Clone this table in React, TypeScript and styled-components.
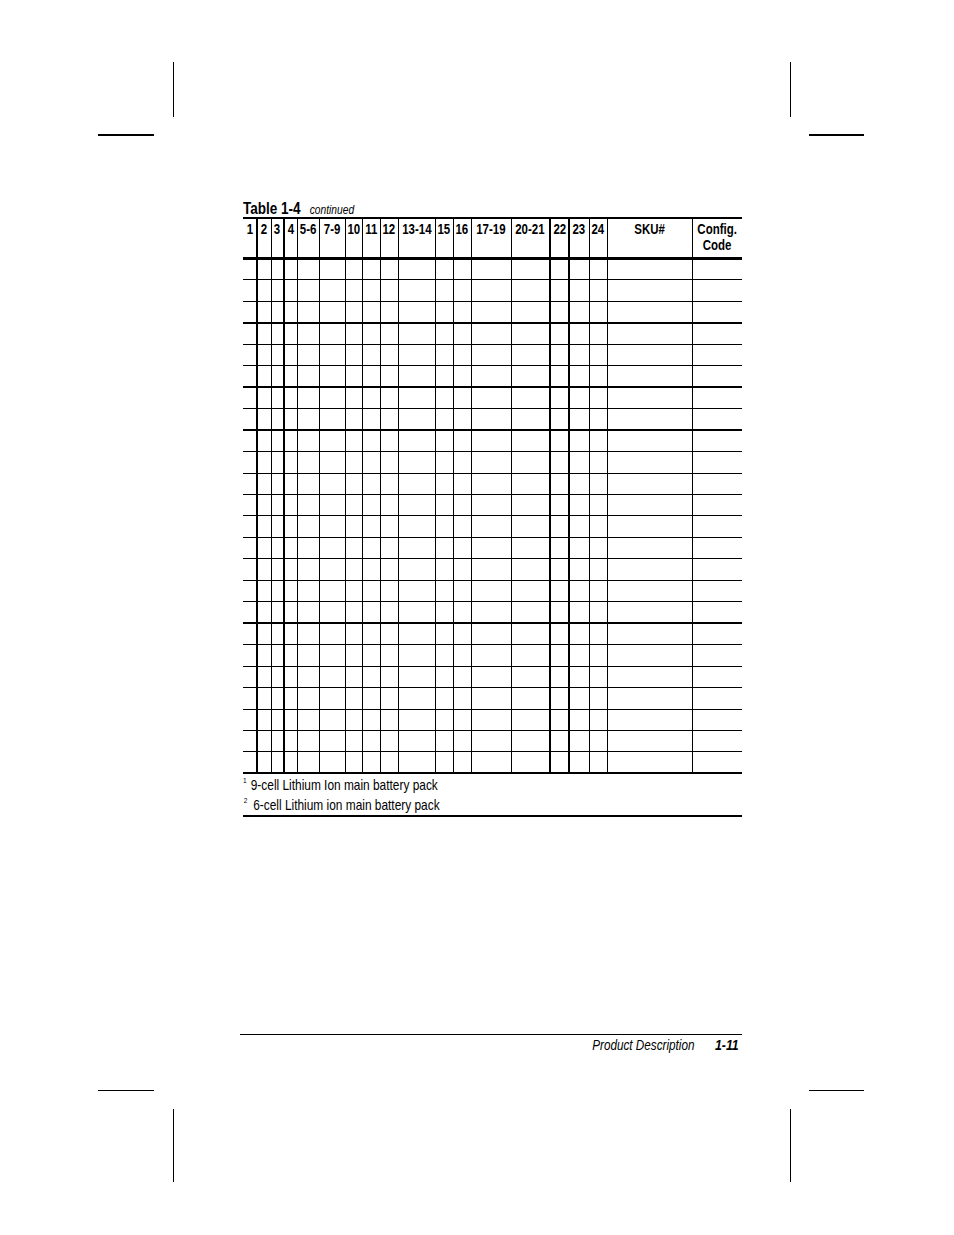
import React from 'react';
import styled, { createGlobalStyle } from 'styled-components';

const font = `"Liberation Sans", Arial, Helvetica, sans-serif`;

const GlobalStyle = createGlobalStyle`
  html, body {
    margin: 0;
    padding: 0;
    background: #fff;
  }
`;

const Page = styled.div`
  width: 954px;
  height: 1235px;
  display: flex;
  flex-direction: column;
  background: #fff;
  color: #000;
  font-family: ${font};
`;

// the print face is a condensed grotesque; squeeze the regular face to match it
const Squeeze = styled.span<{ $origin: 'left' | 'center' | 'right' }>`
  display: inline-block;
  white-space: pre-line;
  transform: scaleX(0.82);
  transform-origin: ${({ $origin }) => $origin} center;
`;

const MarkBand = styled.div<{ $bottom?: boolean }>`
  display: flex;
  justify-content: space-between;
  padding: ${({ $bottom }) => ($bottom ? '0 90px 53px 98px' : '62px 90px 0 98px')};
`;

const Corner = styled.div<{ $side: 'left' | 'right'; $bottom?: boolean }>`
  display: flex;
  flex-direction: column;
  align-items: ${({ $side }) => ($side === 'left' ? 'flex-end' : 'flex-start')};
  width: ${({ $side }) => ($side === 'left' ? '76px' : '74px')};
  gap: ${({ $bottom }) => ($bottom ? '18px' : '17px')};
`;

const VMark = styled.div<{ $len: number }>`
  width: 1px;
  height: ${({ $len }) => $len}px;
  background: #000;
`;

const HMark = styled.div<{ $side: 'left' | 'right'; $weight: number }>`
  width: ${({ $side }) => ($side === 'left' ? '56px' : '55px')};
  height: ${({ $weight }) => $weight}px;
  background: #000;
  align-self: ${({ $side }) => ($side === 'left' ? 'flex-start' : 'flex-end')};
`;

const Content = styled.div`
  margin: 63px 0 0 243px;
  width: 499px;
`;

const Caption = styled.div`
  height: 18px;
  line-height: 18px;
  white-space: nowrap;
`;

const CaptionTitle = styled.span`
  font-size: 16.5px;
  font-weight: bold;
`;

const CaptionNote = styled.span`
  margin-left: 11px;
  font-size: 12.5px;
  font-style: italic;
`;

const Grid = styled.table`
  width: 499px;
  table-layout: fixed;
  border-collapse: collapse;
  border-top: 2px solid #000;
  border-bottom: 2px solid #000;

  th, td {
    border-left: 1px solid #000;
    padding: 0;
  }

  th:first-child, td:first-child {
    border-left: none;
  }

  th:nth-child(2), td:nth-child(2),
  th:nth-child(4), td:nth-child(4),
  th:nth-child(15), td:nth-child(15),
  th:nth-child(16), td:nth-child(16) {
    border-left-width: 2px;
  }
`;

const HeadRow = styled.tr`
  border-bottom: 3px solid #000;
`;

const HeadCell = styled.th`
  height: 36px;
  vertical-align: top;
  text-align: center;
  font-size: 14px;
  font-weight: bold;
  line-height: 16px;
  padding-top: 2px !important;
  white-space: nowrap;
`;

const BodyRow = styled.tr<{ $heavy?: boolean }>`
  height: 21.46px;
  border-top: ${({ $heavy }) => ($heavy ? '2px' : '1px')} solid #000;
`;

const Notes = styled.div`
  border-bottom: 2px solid #000;
  padding-top: 1px;
  font-size: 14.5px;
  line-height: 20px;
`;

const Note = styled.div`
  white-space: nowrap;
`;

const Ref = styled.sup<{ $gap: number; $lead: number }>`
  font-size: 8px;
  line-height: 0;
  vertical-align: 7px;
  margin-left: ${({ $lead }) => $lead}px;
  margin-right: ${({ $gap }) => $gap}px;
`;

const Footer = styled.div`
  margin: auto 0 0 240px;
  width: 502px;
  height: 56px;
  box-sizing: border-box;
  border-top: 1px solid #000;
  display: flex;
  justify-content: flex-end;
  padding: 2px 3px 0 0;
  font-size: 14.3px;
  line-height: 16px;
  font-style: italic;
  white-space: nowrap;
`;

const PageNo = styled.span`
  margin-left: 25px;
  font-weight: bold;
  font-size: 15px;
`;

const columns = [
  { label: '1', width: 14 },
  { label: '2', width: 14 },
  { label: '3', width: 13 },
  { label: '4', width: 13 },
  { label: '5-6', width: 22 },
  { label: '7-9', width: 26 },
  { label: '10', width: 17 },
  { label: '11', width: 18 },
  { label: '12', width: 18 },
  { label: '13-14', width: 37 },
  { label: '15', width: 18 },
  { label: '16', width: 18 },
  { label: '17-19', width: 40 },
  { label: '20-21', width: 39 },
  { label: '22', width: 19 },
  { label: '23', width: 20 },
  { label: '24', width: 18 },
  { label: 'SKU#', width: 85 },
  { label: 'Config.\nCode', width: 50 },
];

// rows whose top rule is drawn heavier
const heavyRows = [3, 6, 8, 17];

export default function App() {
  const rows = Array.from({ length: 24 }, (_, i) => i);

  return (
    <Page>
      <GlobalStyle />
      <MarkBand>
        <Corner $side="left">
          <VMark $len={55} />
          <HMark $side="left" $weight={2} />
        </Corner>
        <Corner $side="right">
          <VMark $len={55} />
          <HMark $side="right" $weight={2} />
        </Corner>
      </MarkBand>

      <Content>
        <Caption>
          <Squeeze $origin="left">
            <CaptionTitle>Table 1-4</CaptionTitle>
            <CaptionNote>continued</CaptionNote>
          </Squeeze>
        </Caption>
        <Grid>
          <colgroup>
            {columns.map((c) => (
              <col key={c.label} style={{ width: c.width }} />
            ))}
          </colgroup>
          <thead>
            <HeadRow>
              {columns.map((c) => (
                <HeadCell key={c.label}>
                  <Squeeze $origin="center">{c.label}</Squeeze>
                </HeadCell>
              ))}
            </HeadRow>
          </thead>
          <tbody>
            {rows.map((r) => (
              <BodyRow key={r} $heavy={heavyRows.includes(r)}>
                {columns.map((c) => (
                  <td key={c.label} />
                ))}
              </BodyRow>
            ))}
          </tbody>
        </Grid>
        <Notes>
          <Note>
            <Squeeze $origin="left">
              <Ref $lead={0} $gap={5}>1</Ref>9-cell Lithium Ion main battery pack
            </Squeeze>
          </Note>
          <Note>
            <Squeeze $origin="left">
              <Ref $lead={1} $gap={7}>2</Ref>6-cell Lithium ion main battery pack
            </Squeeze>
          </Note>
        </Notes>
      </Content>

      <Footer>
        <Squeeze $origin="right">
          <span>Product Description</span>
          <PageNo>1-11</PageNo>
        </Squeeze>
      </Footer>
      <MarkBand $bottom>
        <Corner $side="left" $bottom>
          <HMark $side="left" $weight={1} />
          <VMark $len={73} />
        </Corner>
        <Corner $side="right" $bottom>
          <HMark $side="right" $weight={1} />
          <VMark $len={73} />
        </Corner>
      </MarkBand>
    </Page>
  );
}
